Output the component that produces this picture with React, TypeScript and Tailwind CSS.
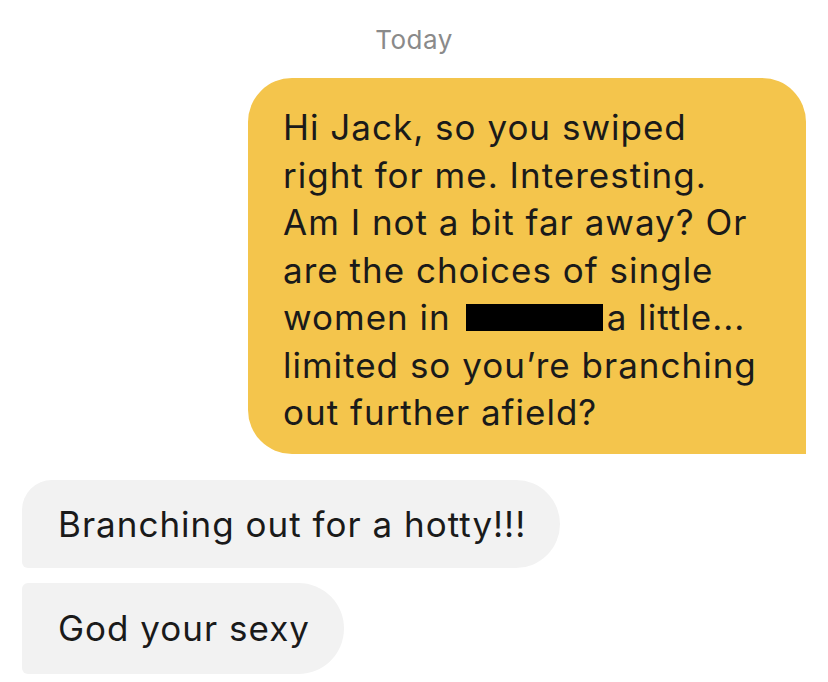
import React from 'react';

const lines = [
    'Hi Jack, so you swiped',
    'right for me. Interesting.',
    'Am I not a bit far away? Or',
    'are the choices of single',
];

export default function App() {
    return (
        <div className="w-[828px] h-[682px] bg-white flex flex-col font-['Inter',sans-serif] text-[#1a1a1a] overflow-hidden">
            <div className="text-center text-[26px] text-[#8a8a8a] pt-[22px] leading-[36px] tracking-[0.5px]">Today</div>

            {/* sent message */}
            <div className="self-end mr-[22px] mt-[20px] w-[558px] h-[376px] bg-[#f4c54c] rounded-[44px] rounded-br-none pl-[35px] pt-[26px] text-[35px] leading-[47.5px] tracking-[1px]">
                {lines.map((l) => (
                    <div key={l}>{l}</div>
                ))}
                <div className="flex items-center">
                    <span>women in</span>
                    <span className="inline-block w-[137px] h-[27px] bg-black ml-[15px] mr-[4px]" />
                    <span>a little...</span>
                </div>
                <div>limited so you’re branching</div>
                <div>out further afield?</div>
            </div>

            {/* received messages */}
            <div className="ml-[22px] mt-[26px] flex flex-col gap-[15px] items-start text-[35px] tracking-[1px]">
                <div className="h-[88px] flex items-center pl-[36px] pr-[34px] bg-[#f2f2f2] rounded-[44px] rounded-tl-[30px] rounded-bl-[6px]">
                    Branching out for a hotty!!!
                </div>
                <div className="h-[91px] flex items-center pl-[36px] pr-[34px] bg-[#f2f2f2] rounded-r-[46px] rounded-l-[6px]">
                    God your sexy
                </div>
            </div>
        </div>
    );
}
